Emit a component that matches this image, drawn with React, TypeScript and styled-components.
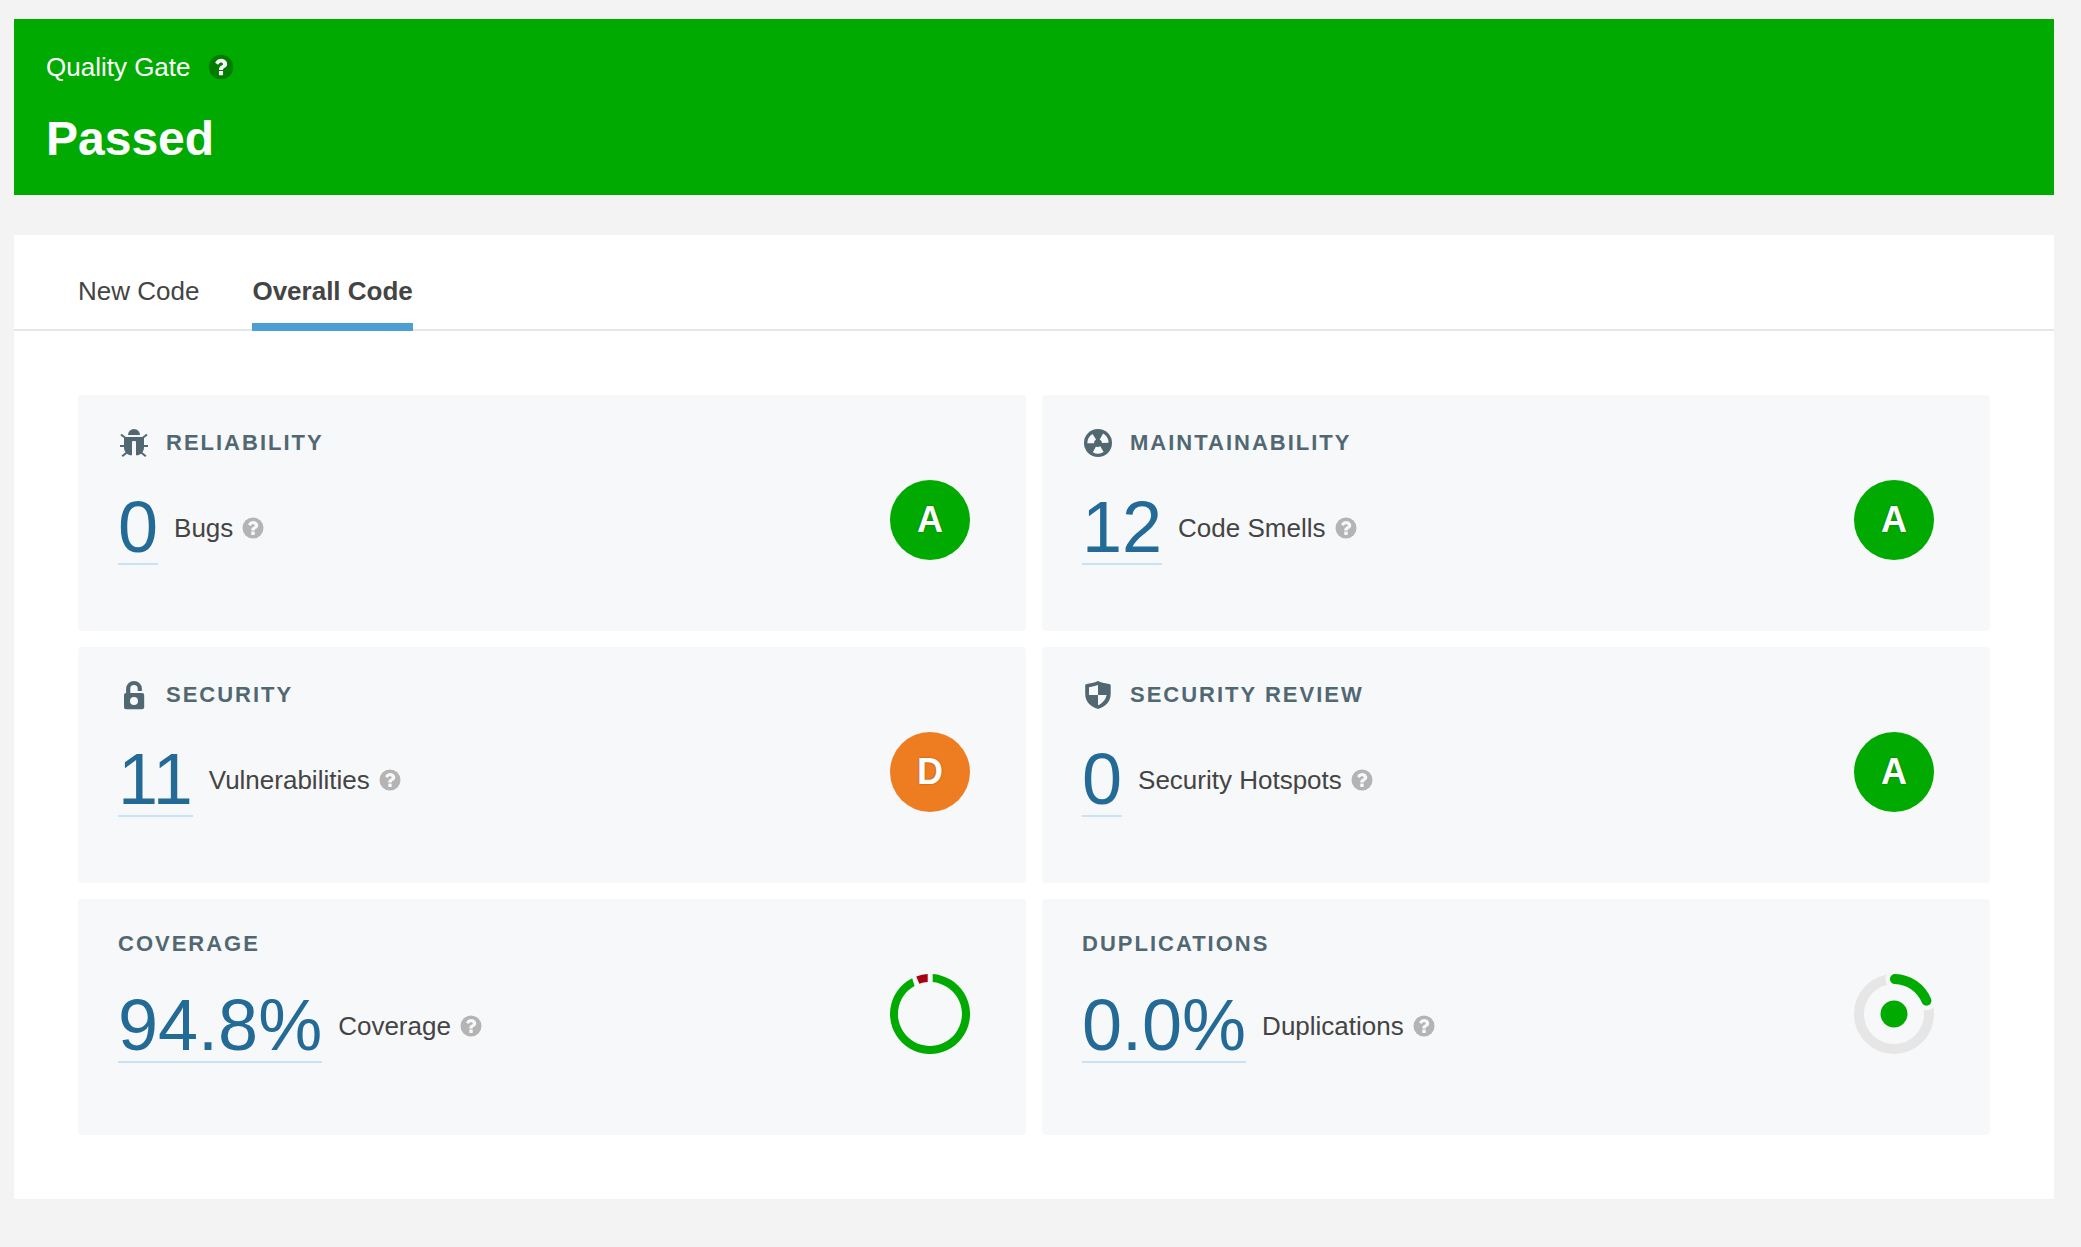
import React from 'react';
import styled, { createGlobalStyle } from 'styled-components';

const cardColor = '#f7f8fa';

const GlobalStyle = createGlobalStyle`
  *, *::before, *::after { box-sizing: border-box; }
  body {
    margin: 0;
    background: #f3f3f3;
    color: #444;
    font-family: Arial, "Liberation Sans", Helvetica, sans-serif;
    font-size: 26px;
  }
  h1, h2, p { margin: 0; }
  svg { display: block; flex: none; }
`;

const Page = styled.main`
  display: flex;
  flex-direction: column;
  gap: 40px;
  padding: 19px 27px 48px 14px;
`;

const Banner = styled.section`
  display: flex;
  flex-direction: column;
  gap: 32px;
  padding: 32px;
  background: #00aa00;
  color: #fff;
`;

const BannerLabel = styled.div`
  display: flex;
  align-items: center;
  gap: 16px;
  line-height: 32px;
`;

const BannerStatus = styled.h1`
  font-size: 48px;
  line-height: 48px;
  font-weight: 700;
`;

const Panel = styled.section`
  background: #fff;
`;

const Tabs = styled.div`
  display: flex;
  gap: 53px;
  padding: 41px 64px 0;
  border-bottom: 2px solid #e6e6e6;
`;

const Tab = styled.button<{ $active?: boolean }>`
  margin: 0 0 -2px;
  padding: 0 0 17px;
  border: 0;
  border-bottom: 8px solid ${(p) => (p.$active ? '#4b9fd5' : 'transparent')};
  background: none;
  color: #444;
  font-family: inherit;
  font-size: 26px;
  line-height: 30px;
  font-weight: ${(p) => (p.$active ? 700 : 400)};
  cursor: pointer;
`;

const Grid = styled.div`
  display: grid;
  grid-template-columns: repeat(2, minmax(0, 1fr));
  grid-auto-rows: 1fr;
  gap: 16px;
  padding: 64px;
`;

const Card = styled.article`
  display: flex;
  justify-content: space-between;
  align-items: flex-start;
  padding: 32px 56px 66px 40px;
  border-radius: 4px;
  background: ${cardColor};
`;

const CardMain = styled.div`
  display: flex;
  flex-direction: column;
  gap: 32px;
`;

const CardTitle = styled.h2`
  display: flex;
  align-items: center;
  gap: 16px;
  color: #516873;
  font-size: 22px;
  line-height: 26px;
  font-weight: 700;
  letter-spacing: 2px;
  text-transform: uppercase;
`;

const Measure = styled.div`
  display: flex;
  align-items: center;
  gap: 16px;
`;

const Value = styled.a`
  border-bottom: 2px solid #cae3f2;
  color: #236a97;
  font-size: 72px;
  line-height: 72px;
  text-decoration: none;
`;

const MeasureLabel = styled.span`
  display: flex;
  align-items: center;
  gap: 8px;
  line-height: 32px;
`;

const HelpButton = styled.button<{ $color: string }>`
  display: block;
  padding: 0;
  border: 0;
  background: none;
  color: ${(p) => p.$color};
  cursor: pointer;
`;

const Rating = styled.span<{ $color: string }>`
  margin-top: 53px;
  width: 80px;
  border-radius: 50%;
  background: ${(p) => p.$color};
  color: #fff;
  font-size: 36px;
  line-height: 80px;
  font-weight: 700;
  text-align: center;
  text-shadow: 0 0 2px rgba(0, 0, 0, 0.35);
`;

const ChartSlot = styled.div`
  margin-top: 43px;
`;

function Help({ topic, size = 24, color = '#b4b4b4', mark = cardColor }: {
  topic: string;
  size?: number;
  color?: string;
  mark?: string;
}) {
  return (
    <HelpButton type="button" aria-label={`Help: ${topic}`} $color={color}>
      <svg width={size} height={size} viewBox="0 0 16 16">
        <circle cx="8" cy="8" r="7" fill="currentColor" />
        <path
          fill={mark}
          d="M9.167 12.375v-1.75a.284.284 0 0 0-.292-.292h-1.75a.284.284 0 0 0-.292.292v1.75c0 .17.12.292.292.292h1.75c.17 0 .292-.12.292-.292zM11.5 6.25c0-.535-.169-1.03-.506-1.486a3.452 3.452 0 0 0-1.262-1.057 3.428 3.428 0 0 0-1.55-.374c-1.476 0-2.603.647-3.381 1.942-.091.146-.067.273.073.382l1.203.911a.266.266 0 0 0 .174.055c.091 0 .164-.036.219-.11.322-.412.583-.69.783-.836.207-.146.468-.218.784-.218.291 0 .551.079.779.236.228.158.342.337.342.538 0 .231-.061.416-.183.556-.121.14-.328.276-.62.41-.382.17-.733.432-1.053.788-.319.355-.469.736-.469 1.143v.328c0 .17.12.292.292.292h1.75c.17 0 .292-.12.292-.292 0-.115.065-.265.196-.451.13-.185.296-.336.496-.451.194-.109.343-.195.447-.256.103-.06.243-.162.419-.305a2.25 2.25 0 0 0 .405-.415c.094-.133.179-.305.255-.514.076-.21.115-.436.115-.679z"
        />
      </svg>
    </HelpButton>
  );
}

function BugIcon() {
  return (
    <svg width="32" height="32" viewBox="0 0 32 32" fill="currentColor">
      <path d="M10 8a6 6 0 0 1 12 0z" />
      <path d="M6.5 10h19l.5 1v9.500c0 4-3 7-6 7.700h-2V15a1 1 0 0 0-1-1h-2a1 1 0 0 0-1 1v13.200h-2c-3-.7-6-3.700-6-7.700V11z" />
      <path
        d="M3 7.500l4.500 3.500M29 7.500L24.500 11M2 19h5M30 19h-5M4.200 29.300L9.500 25M27.800 29.300L22.500 25"
        fill="none"
        stroke="currentColor"
        strokeWidth="2"
      />
    </svg>
  );
}

function SmellIcon() {
  const wedge = 'M5.3 16.300A10.700 10.700 0 0 1 10.600 6.900L14 12.500A4.200 4.200 0 0 0 12 16.300z';
  return (
    <svg width="32" height="32" viewBox="0 0 32 32">
      <circle cx="16" cy="16" r="14" fill="currentColor" />
      {[0, 120, 240].map((angle) => (
        <path key={angle} d={wedge} fill={cardColor} transform={`rotate(${angle} 16 16)`} />
      ))}
    </svg>
  );
}

function LockIcon() {
  return (
    <svg width="32" height="32" viewBox="0 0 32 32">
      <path
        fill="currentColor"
        fillRule="evenodd"
        d="M8 14h16a2.200 2.200 0 0 1 2.200 2.200v12A2.200 2.200 0 0 1 24 30.300H8A2 2 0 0 1 6 28.300V16a2 2 0 0 1 2-2zm8 4a4 4 0 1 0 0 8 4 4 0 0 0 0-8z"
      />
      <path d="M10.200 15v-5.200a5.800 5.800 0 0 1 11.600 0V12" fill="none" stroke="currentColor" strokeWidth="4.200" />
    </svg>
  );
}

function ShieldIcon() {
  return (
    <svg width="32" height="32" viewBox="0 0 32 32">
      <path
        fill="currentColor"
        fillRule="evenodd"
        d="M16 2c4 1.700 8 2.600 11.200 3 .9.200 1.500.8 1.500 1.700V15c0 7.500-5.200 13-12.700 15C8.500 28 3.200 22.500 3.200 15V6.700c0-.9.600-1.500 1.500-1.700C8 4.600 12 3.700 16 2zM16 6c-2.800 1-5.800 1.700-9 2.200V16h9zM16 16v10.300c4.600-2 7.700-5.700 8.600-10.300z"
      />
    </svg>
  );
}

function CoverageChart() {
  return (
    <svg width="80" height="80" viewBox="-40 -40 80 80" role="img" aria-label="Coverage 94.8%">
      <path fill="#00aa00" d="M2.700-39.900A40 40 0 1 1-17.800-35.800L-15.400-28.100A32 32 0 1 0 2.700-31.900z" />
      <path fill="#a4030f" d="M-13.700-37.600A40 40 0 0 1-2.300-39.900V-31.900A32 32 0 0 0-10.700-30.200z" />
    </svg>
  );
}

function DuplicationsChart() {
  const arc = 'M.9-35A35 35 0 0 1 32.400-13.300';
  return (
    <svg width="80" height="80" viewBox="-40 -40 80 80" role="img" aria-label="Duplications under 3%">
      <circle r="35" fill="none" stroke="#e6e6e6" strokeWidth="10" />
      <path d={arc} fill="none" stroke={cardColor} strokeWidth="19" strokeLinecap="round" />
      <path d={arc} fill="none" stroke="#00aa00" strokeWidth="10" strokeLinecap="round" />
      <circle r="13.500" fill="#00aa00" />
    </svg>
  );
}

type MeasureInfo = {
  title: string;
  value: string;
  label: string;
  icon?: React.ReactNode;
  rating?: 'A' | 'D';
  chart?: React.ReactNode;
};

const ratingColors = { A: '#00aa00', D: '#ed7d20' };

const measures: MeasureInfo[] = [
  { title: 'Reliability', value: '0', label: 'Bugs', icon: <BugIcon />, rating: 'A' },
  { title: 'Maintainability', value: '12', label: 'Code Smells', icon: <SmellIcon />, rating: 'A' },
  { title: 'Security', value: '11', label: 'Vulnerabilities', icon: <LockIcon />, rating: 'D' },
  { title: 'Security Review', value: '0', label: 'Security Hotspots', icon: <ShieldIcon />, rating: 'A' },
  { title: 'Coverage', value: '94.8%', label: 'Coverage', chart: <CoverageChart /> },
  { title: 'Duplications', value: '0.0%', label: 'Duplications', chart: <DuplicationsChart /> },
];

function MeasureCard({ title, value, label, icon, rating, chart }: MeasureInfo) {
  return (
    <Card>
      <CardMain>
        <CardTitle>
          {icon}
          {title}
        </CardTitle>
        <Measure>
          <Value href="#" aria-label={`${value} ${label}`}>{value}</Value>
          <MeasureLabel>
            {label}
            <Help topic={label} />
          </MeasureLabel>
        </Measure>
      </CardMain>
      {rating && <Rating $color={ratingColors[rating]}>{rating}</Rating>}
      {chart && <ChartSlot>{chart}</ChartSlot>}
    </Card>
  );
}

const tabs = ['New Code', 'Overall Code'];

export default function App() {
  const [active, setActive] = React.useState('Overall Code');
  return (
    <>
      <GlobalStyle />
      <Page>
        <Banner>
          <BannerLabel>
            Quality Gate
            <Help topic="Quality Gate" size={28} color="#007d00" mark="#fff" />
          </BannerLabel>
          <BannerStatus>Passed</BannerStatus>
        </Banner>
        <Panel>
          <Tabs role="tablist">
            {tabs.map((tab) => (
              <Tab
                key={tab}
                type="button"
                role="tab"
                aria-selected={tab === active}
                $active={tab === active}
                onClick={() => setActive(tab)}
              >
                {tab}
              </Tab>
            ))}
          </Tabs>
          <Grid>
            {measures.map((m) => (
              <MeasureCard key={m.title} {...m} />
            ))}
          </Grid>
        </Panel>
      </Page>
    </>
  );
}
